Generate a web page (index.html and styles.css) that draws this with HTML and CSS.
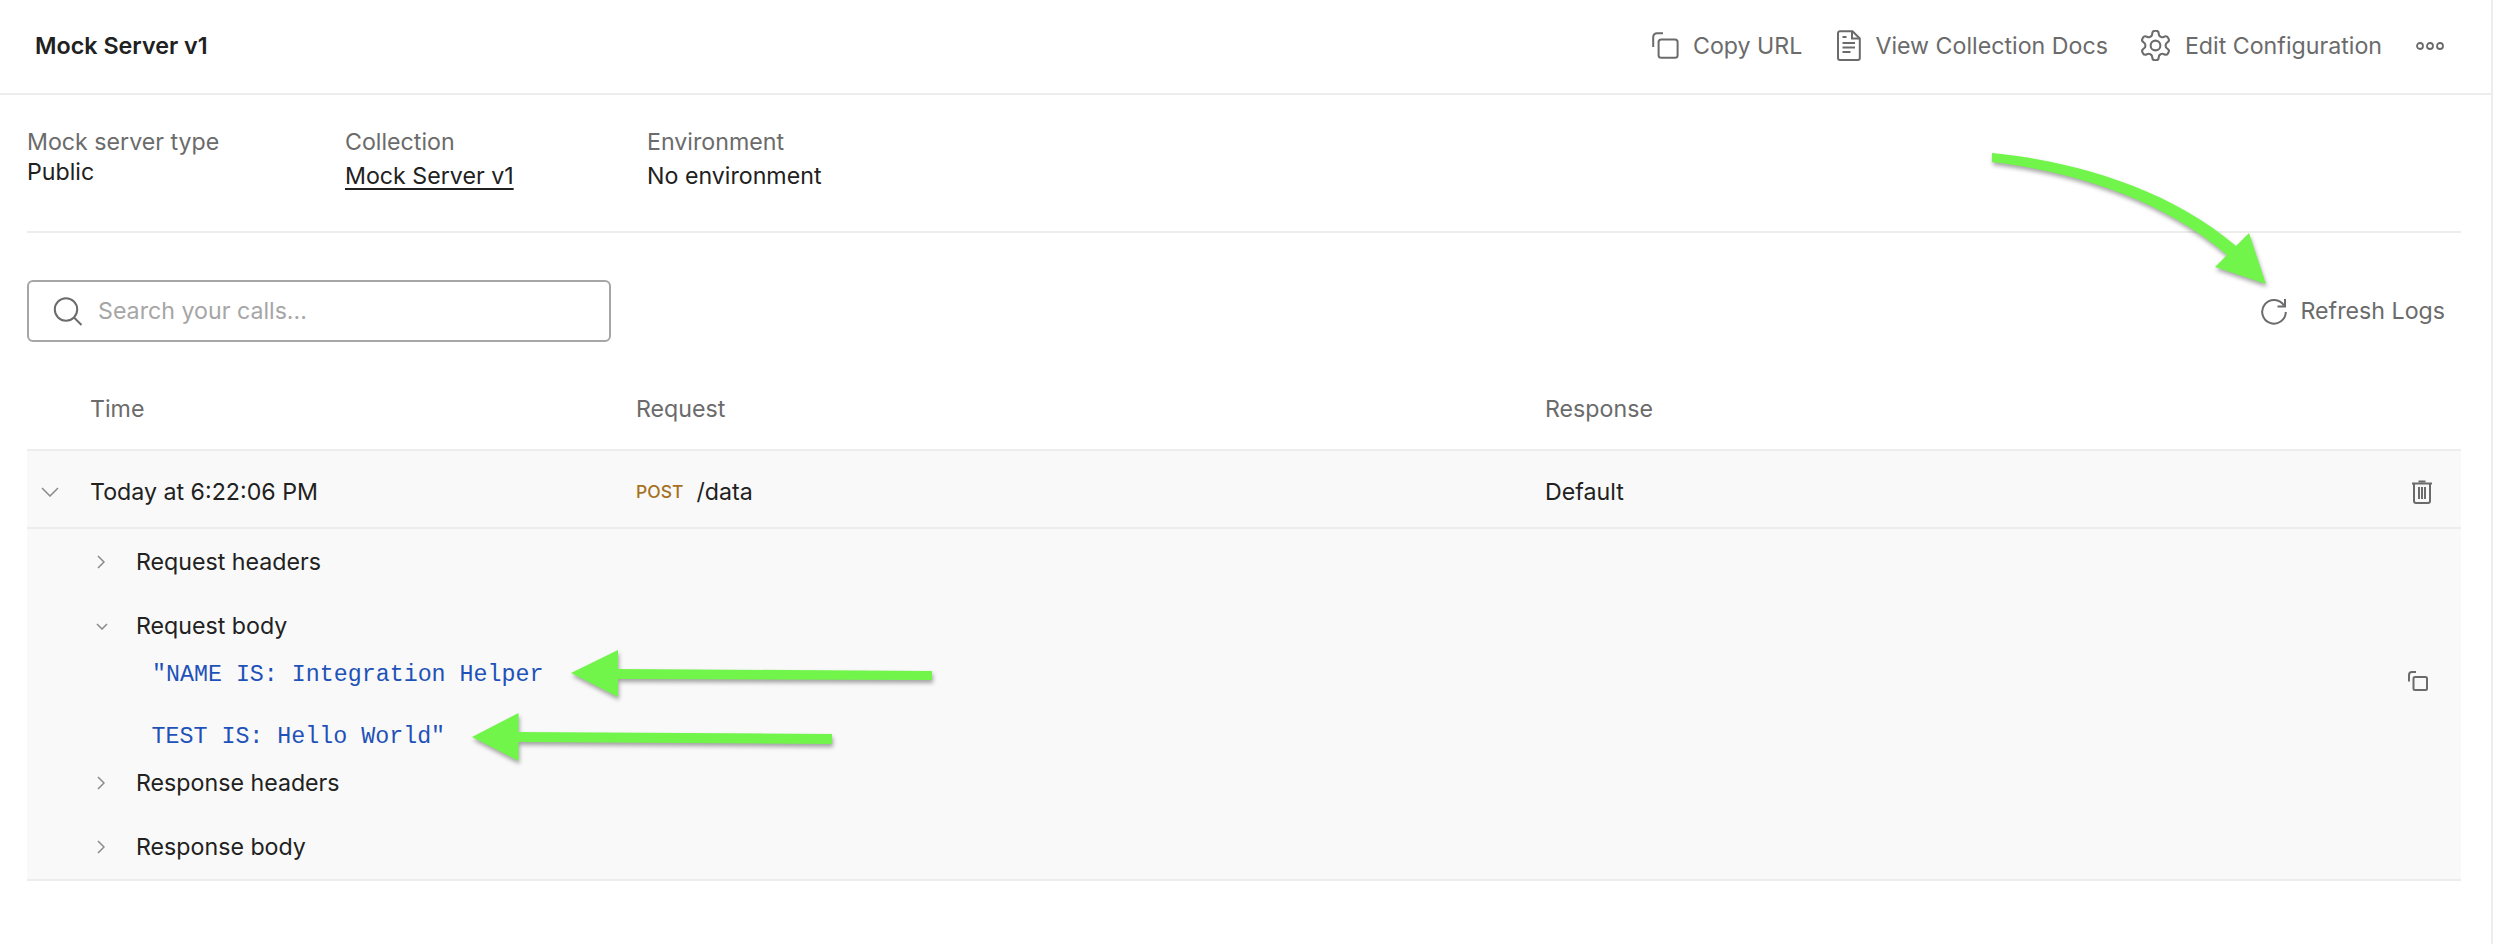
FILE: index.html
```html
<!DOCTYPE html>
<html lang="en">
<head>
<meta charset="utf-8">
<title>Mock Server v1</title>
<link rel="stylesheet" href="styles.css">
</head>
<body>
<div class="page">
  <header class="topbar">
    <h1 class="title">Mock Server v1</h1>
    <nav class="actions">
      <a class="action">
        <svg class="ic ic-copy" viewBox="0 0 27 27"><path d="M11 1.200H5a3.800 3.800 0 0 0-3.800 3.800V15"/><rect x="6.600" y="7.500" width="19" height="18.300" rx="2.600"/></svg>
        <span>Copy URL</span>
      </a>
      <a class="action">
        <svg class="ic ic-doc" viewBox="0 0 24 31"><path d="M3 1.200h12.500l7.300 7.300V28a2 2 0 0 1-2 2H3a2 2 0 0 1-2-2V3.200a2 2 0 0 1 2-2z"/><path d="M15 1.500V8.500h7.500"/><path d="M5.500 7h4M5.500 13h12.500M5.500 17.500h12.500M5.500 22h8"/></svg>
        <span>View Collection Docs</span>
      </a>
      <a class="action action-config">
        <svg class="ic ic-gear" viewBox="1.500 1.500 21 21"><path d="M12.220 2h-.44a2 2 0 0 0-2 2v.18a2 2 0 0 1-1 1.730l-.43.25a2 2 0 0 1-2 0l-.15-.08a2 2 0 0 0-2.730.73l-.22.38a2 2 0 0 0 .73 2.730l.15.1a2 2 0 0 1 1 1.720v.51a2 2 0 0 1-1 1.740l-.15.09a2 2 0 0 0-.73 2.730l.22.38a2 2 0 0 0 2.730.73l.15-.08a2 2 0 0 1 2 0l.43.25a2 2 0 0 1 1 1.730V20a2 2 0 0 0 2 2h.44a2 2 0 0 0 2-2v-.18a2 2 0 0 1 1-1.730l.43-.25a2 2 0 0 1 2 0l.15.08a2 2 0 0 0 2.730-.73l.22-.39a2 2 0 0 0-.73-2.730l-.15-.08a2 2 0 0 1-1-1.740v-.5a2 2 0 0 1 1-1.740l.15-.09a2 2 0 0 0 .73-2.730l-.22-.38a2 2 0 0 0-2.730-.73l-.15.08a2 2 0 0 1-2 0l-.43-.25a2 2 0 0 1-1-1.730V4a2 2 0 0 0-2-2z"/><circle cx="12" cy="12" r="3.300"/></svg>
        <span>Edit Configuration</span>
      </a>
      <svg class="ic ic-more" viewBox="0 0 28 8"><circle cx="4" cy="4" r="3"/><circle cx="14" cy="4" r="3"/><circle cx="24" cy="4" r="3"/></svg>
    </nav>
  </header>

  <main class="content">
    <section class="meta">
      <div class="meta-item meta-type">
        <div class="meta-label">Mock server type</div>
        <div class="meta-value meta-value-tight">Public</div>
      </div>
      <div class="meta-item meta-collection">
        <div class="meta-label">Collection</div>
        <div class="meta-value"><a class="link">Mock Server v1</a></div>
      </div>
      <div class="meta-item">
        <div class="meta-label">Environment</div>
        <div class="meta-value">No environment</div>
      </div>
    </section>

    <section class="toolbar">
      <div class="search">
        <svg class="ic ic-search" viewBox="0 0 30 29"><circle cx="13" cy="12.500" r="11.200"/><path d="M21 20.500l7.500 7.500"/></svg>
        <span class="placeholder">Search your calls...</span>
      </div>
      <a class="refresh">
        <svg class="ic ic-refresh" viewBox="0 0 26 27"><path d="M23 7.500A11.800 11.800 0 1 0 24.800 14"/><path d="M24 1v7.500h-7.500"/></svg>
        <span>Refresh Logs</span>
      </a>
    </section>

    <section class="table">
      <div class="thead">
        <span></span><span>Time</span><span>Request</span><span>Response</span>
      </div>
      <div class="tbody">
        <div class="trow">
          <svg class="ic ic-chev-lg" viewBox="0 0 18 10"><path d="M1 1l8 8 8-8"/></svg>
          <span>Today at 6:22:06 PM</span>
          <span class="req"><span class="method">POST</span><span>/data</span></span>
          <span>Default</span>
          <svg class="ic ic-trash" viewBox="0 0 20 24"><path d="M0 3.500h20"/><path d="M6.500 1.500h7"/><path d="M2 4v17a2 2 0 0 0 2 2h12a2 2 0 0 0 2-2V4"/><path d="M7 7v12M10 7v12M13 7v12"/></svg>
        </div>
        <div class="detail">
          <div class="sec">
            <svg class="ic ic-chev" viewBox="0 0 8 14"><path d="M1 1l6 6-6 6"/></svg>
            <span>Request headers</span>
          </div>
          <div class="sec sec-open">
            <svg class="ic ic-chev-d" viewBox="0 0 12 7"><path d="M1 1l5 5 5-5"/></svg>
            <span>Request body</span>
          </div>
          <div class="code">
            <div class="code-lines">
              <div class="line">"NAME IS: Integration Helper</div>
              <div class="line line-second">TEST IS: Hello World"</div>
            </div>
            <svg class="ic ic-copy-sm" viewBox="0 0 20 20"><path d="M8 1H4a3 3 0 0 0-3 3v6.500"/><rect x="5.500" y="6" width="13.500" height="13" rx="1.500"/></svg>
          </div>
          <div class="sec">
            <svg class="ic ic-chev" viewBox="0 0 8 14"><path d="M1 1l6 6-6 6"/></svg>
            <span>Response headers</span>
          </div>
          <div class="sec sec-last">
            <svg class="ic ic-chev" viewBox="0 0 8 14"><path d="M1 1l6 6-6 6"/></svg>
            <span>Response body</span>
          </div>
        </div>
      </div>
    </section>
  </main>

  <svg class="annotations" viewBox="0 0 2500 944" aria-hidden="true">
    <path class="arrow" d="M1992 153C2065 160 2165 185 2236 246L2249 233L2266 284L2215 267L2227 255C2155 193 2060 170 1992 162Z"/>
    <path class="arrow" d="M571 673L618 650V669L932 671V680L618 679V697Z"/>
    <path class="arrow" d="M472 737L518.500 713V732L832 734V744L518.500 742V761Z"/>
  </svg>
</div>
</body>
</html>
```

FILE: styles.css
```css
* { box-sizing: border-box; }

html, body {
  margin: 0;
  padding: 0;
  background: #fff;
}

body {
  font-family: Inter, "Liberation Sans", sans-serif;
  font-size: 23.200px;
  color: #212121;
}

.page {
  position: relative;
  width: 2493px;
  height: 944px;
  border-right: 2px solid #ededed;
  overflow: hidden;
}

.ic {
  display: block;
  flex: none;
  fill: none;
  stroke: #6b6b6b;
  stroke-width: 2;
}

.topbar {
  display: flex;
  align-items: center;
  justify-content: space-between;
  height: 95px;
  padding: 0 47px 2px 35px;
  border-bottom: 2px solid #ededed;
}

.title {
  margin: 0;
  font-size: 23.300px;
  font-weight: 600;
  color: #212121;
}

.actions {
  display: flex;
  align-items: center;
  gap: 35px;
  color: #6b6b6b;
}

.action {
  display: flex;
  align-items: center;
  gap: 14px;
}

.action-config { margin-left: -3px; }

.ic-copy { width: 27px; height: 27px; }
.ic-doc { width: 24px; height: 31px; }
.ic-gear { width: 31px; height: 31px; stroke-width: 1.400; }
.ic-more { width: 28px; height: 8px; stroke-width: 1.800; margin-left: -1px; }

.content {
  padding: 0 30px 0 27px;
}

.meta {
  display: flex;
  height: 138px;
  padding-top: 32px;
  border-bottom: 2px solid #ededed;
}

.meta-item { flex: none; }
.meta-type { width: 318px; }
.meta-collection { width: 302px; }

.meta-label {
  line-height: 30px;
  color: #6b6b6b;
}

.meta-value {
  margin-top: 4px;
  line-height: 30px;
}

.meta-value-tight { margin-top: 0; }

.link {
  color: #212121;
  text-decoration: underline;
  text-underline-offset: 4px;
}

.toolbar {
  display: flex;
  align-items: center;
  justify-content: space-between;
  margin-top: 47px;
  padding-right: 16px;
}

.search {
  display: flex;
  align-items: center;
  gap: 15px;
  width: 584px;
  height: 62px;
  padding-left: 24px;
  border: 2px solid #a6a6a6;
  border-radius: 6px;
}

.ic-search { width: 30px; height: 29px; }
.placeholder { color: #a6a6a6; }

.refresh {
  display: flex;
  align-items: center;
  gap: 14px;
  color: #6b6b6b;
}

.ic-refresh { width: 26px; height: 27px; }

.thead,
.trow {
  display: grid;
  grid-template-columns: 63px 546px 909px 1fr 20px;
  align-items: center;
}

.thead {
  height: 109px;
  padding-top: 27px;
  color: #6b6b6b;
  border-bottom: 2px solid #ededed;
}

.tbody { background: #f9f9f9; }

.trow {
  height: 78px;
  padding: 5px 29px 0 0;
  border-bottom: 2px solid #ededed;
}

.ic-chev-lg { width: 18px; height: 10px; margin-left: 14px; stroke-width: 1.500; stroke: #8a8a8a; }
.ic-trash { width: 20px; height: 24px; }

.req {
  display: flex;
  align-items: center;
  gap: 13px;
}

.method {
  font-size: 17.500px;
  font-weight: 500;
  color: #a6721e;
}

.detail {
  padding: 17px 0 16px 69px;
  border-bottom: 2px solid #ededed;
}

.sec {
  display: flex;
  align-items: center;
  height: 32px;
  margin-bottom: 32px;
  line-height: 32px;
}

.sec-open, .sec-last { margin-bottom: 0; }

.sec .ic { margin-right: 29px; stroke: #8a8a8a; stroke-width: 1.500; }
.ic-chev { width: 8px; height: 14px; margin-left: 1px; }
.sec .ic-chev { margin-right: 31px; }
.ic-chev-d { width: 12px; height: 7px; }
.sec .ic-chev-d { margin-right: 28px; }

.code {
  display: flex;
  justify-content: space-between;
  align-items: flex-start;
  padding: 2px 33px 0 56px;
}

.line {
  font-family: "Liberation Mono", "DejaVu Sans Mono", monospace;
  font-size: 23.300px;
  line-height: 63px;
  color: #1f52b8;
}

.line-second {
  margin-left: -0.500px;
  line-height: 60px;
}

.ic-copy-sm { width: 20px; height: 20px; margin-top: 27px; }

.annotations {
  position: absolute;
  top: 0;
  left: 0;
  width: 2500px;
  height: 944px;
  pointer-events: none;
}

.arrow {
  fill: #72f54a;
  filter: drop-shadow(1px 3px 2px rgba(0, 0, 0, .35));
}
```
